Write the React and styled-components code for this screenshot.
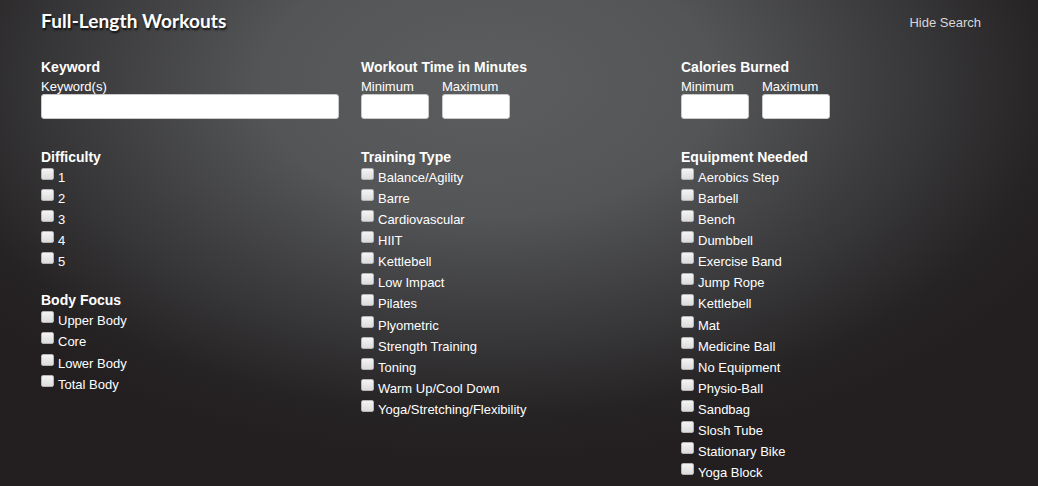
import styled, { createGlobalStyle } from 'styled-components'

const difficulty = ['1', '2', '3', '4', '5']
const bodyFocus = ['Upper Body', 'Core', 'Lower Body', 'Total Body']
const trainingTypes = [
   'Balance/Agility',
   'Barre',
   'Cardiovascular',
   'HIIT',
   'Kettlebell',
   'Low Impact',
   'Pilates',
   'Plyometric',
   'Strength Training',
   'Toning',
   'Warm Up/Cool Down',
   'Yoga/Stretching/Flexibility',
]
const equipment = [
   'Aerobics Step',
   'Barbell',
   'Bench',
   'Dumbbell',
   'Exercise Band',
   'Jump Rope',
   'Kettlebell',
   'Mat',
   'Medicine Ball',
   'No Equipment',
   'Physio-Ball',
   'Sandbag',
   'Slosh Tube',
   'Stationary Bike',
   'Yoga Block',
]

function CheckList({ items }) {
   return (
      <List>
         {items.map((item) => (
            <CheckRow key={item}>
               <Box type="checkbox" />
               <span>{item}</span>
            </CheckRow>
         ))}
      </List>
   )
}

function RangeField({ title }) {
   return (
      <Field>
         <Heading>{title}</Heading>
         <RangeRow>
            <RangeCol>
               <Label>Minimum</Label>
               <TextInput $small />
            </RangeCol>
            <RangeCol>
               <Label>Maximum</Label>
               <TextInput $small />
            </RangeCol>
         </RangeRow>
      </Field>
   )
}

export default function App() {
   return (
      <>
         <GlobalStyle />
         <Page>
            <TopBar>
               <Title>Full-Length Workouts</Title>
               <HideLink>Hide Search</HideLink>
            </TopBar>
            <Grid>
               <Field>
                  <Heading>Keyword</Heading>
                  <Label>Keyword(s)</Label>
                  <TextInput />
               </Field>
               <RangeField title="Workout Time in Minutes" />
               <RangeField title="Calories Burned" />
            </Grid>
            <Grid $second>
               <Column>
                  <Group>
                     <Heading>Difficulty</Heading>
                     <CheckList items={difficulty} />
                  </Group>
                  <Group>
                     <Heading>Body Focus</Heading>
                     <CheckList items={bodyFocus} />
                  </Group>
               </Column>
               <Group>
                  <Heading>Training Type</Heading>
                  <CheckList items={trainingTypes} />
               </Group>
               <Group>
                  <Heading>Equipment Needed</Heading>
                  <CheckList items={equipment} />
               </Group>
            </Grid>
         </Page>
      </>
   )
}

const GlobalStyle = createGlobalStyle`
   html, body {
      margin: 0;
      padding: 0;
      background: #231f20;
   }
   body {
      font-family: "Liberation Sans", Arial, sans-serif;
   }
`

const Page = styled.div`
   width: 1038px;
   height: 486px;
   overflow: hidden;
   box-sizing: border-box;
   padding: 8px 57px 0 41px;
   color: #fff;
   background: radial-gradient(ellipse 62% 78% at 47% 17%, #5c5d5f 0%, #545557 35%, #3c3c3e 62%, #262324 88%, #231f20 100%);
`

const TopBar = styled.div`
   display: flex;
   justify-content: space-between;
   align-items: center;
   height: 24px;
`

const Title = styled.h1`
   margin: 0;
   font-family: Lato, "Noto Sans", sans-serif;
   font-size: 19px;
   font-weight: 700;
   letter-spacing: 0.1px;
   color: #fff;
   text-shadow: 1px 2px 2px rgba(0, 0, 0, 0.75);
`

const HideLink = styled.a`
   font-size: 13px;
   color: #d8d8d8;
   cursor: pointer;
   margin-top: 4px;
`

const Grid = styled.div`
   display: grid;
   grid-template-columns: 320px 320px 1fr;
   margin-top: ${({ $second }) => ($second ? '30px' : '27px')};
`

const Column = styled.div`
   display: flex;
   flex-direction: column;
   gap: 20px;
`

const Field = styled.div`
   display: flex;
   flex-direction: column;
   align-items: flex-start;
`

const Group = styled.div`
   display: flex;
   flex-direction: column;
`

const Heading = styled.h3`
   margin: 0;
   font-size: 14px;
   line-height: 16px;
   font-weight: 700;
   color: #fff;
`

const Label = styled.label`
   font-size: 13px;
   line-height: 15px;
   margin-top: 4px;
   color: #fff;
`

const TextInput = styled.input`
   box-sizing: border-box;
   width: ${({ $small }) => ($small ? '68px' : '298px')};
   height: 25px;
   margin: 0;
   border: 1px solid #c9c9c9;
   border-radius: 3px;
   background: #fff;
`

const RangeRow = styled.div`
   display: flex;
   gap: 13px;
`

const RangeCol = styled.div`
   display: flex;
   flex-direction: column;
`

const List = styled.div`
   display: flex;
   flex-direction: column;
   margin-top: 2px;
`

const CheckRow = styled.label`
   display: flex;
   align-items: flex-start;
   height: 21.08px;
   font-size: 13px;
   line-height: 21px;
   color: #fff;
`

const Box = styled.input`
   appearance: none;
   box-sizing: border-box;
   width: 13px;
   height: 12px;
   margin: 1px 4px 0 0;
   border: 1px solid #b5b5b5;
   border-radius: 2px;
   background: linear-gradient(#f4f4f4, #dcdcdc);
`
